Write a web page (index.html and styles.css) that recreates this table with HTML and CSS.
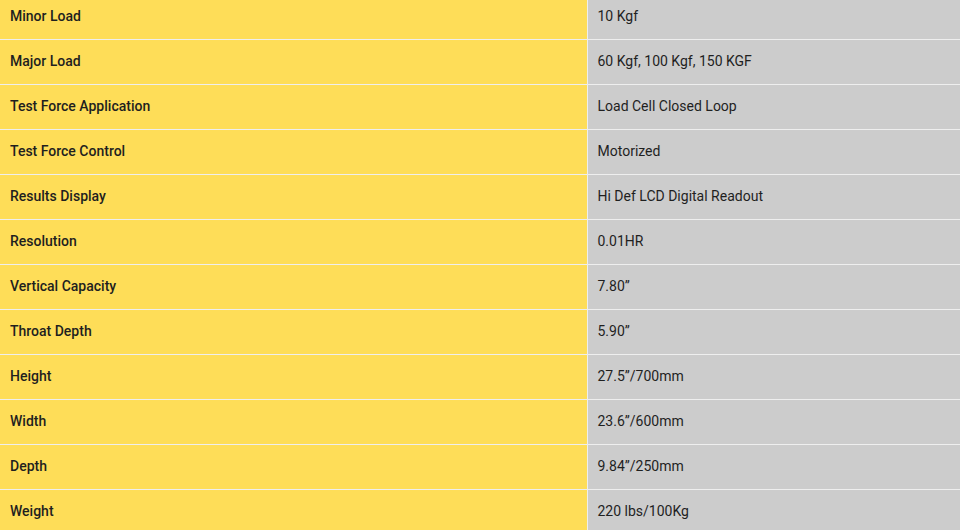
FILE: index.html
```html
<!DOCTYPE html>
<html>
<head>
<meta charset="utf-8">
<link rel="stylesheet" href="styles.css">
</head>
<body>
<div class="wrap">
<table class="specs">
<tbody>
<tr><th>Minor Load</th><td>10 Kgf</td></tr>
<tr><th>Major Load</th><td>60 Kgf, 100 Kgf, 150 KGF</td></tr>
<tr><th>Test Force Application</th><td>Load Cell Closed Loop</td></tr>
<tr><th>Test Force Control</th><td>Motorized</td></tr>
<tr><th>Results Display</th><td>Hi Def LCD Digital Readout</td></tr>
<tr><th>Resolution</th><td>0.01HR</td></tr>
<tr><th>Vertical Capacity</th><td>7.80”</td></tr>
<tr><th>Throat Depth</th><td>5.90”</td></tr>
<tr><th>Height</th><td>27.5”/700mm</td></tr>
<tr><th>Width</th><td>23.6”/600mm</td></tr>
<tr><th>Depth</th><td>9.84”/250mm</td></tr>
<tr><th>Weight</th><td>220 lbs/100Kg</td></tr>
</tbody>
</table>
</div>
</body>
</html>
```
FILE: styles.css
```css
html, body {
  margin: 0;
  padding: 0;
  background: #ffffff;
  overflow: hidden;
}
.wrap {
  width: 960px;
  height: 530px;
  overflow: hidden;
}
.specs {
  width: 960px;
  border-collapse: collapse;
  margin-top: -6px;
  font-family: Roboto, "Liberation Sans", sans-serif;
  font-size: 14px;
  color: #1f1f1f;
}
.specs th,
.specs td {
  height: 45px;
  padding: 0 10px 1px;
  text-align: left;
  vertical-align: middle;
  border-bottom: 1px solid #eeeeee;
  box-sizing: border-box;
}
.specs th {
  width: 587px;
  background: #fedd58;
  font-weight: 500;
  border-right: 1px solid #eeeeee;
}
.specs td {
  background: #cccccc;
  font-weight: 400;
}
```
